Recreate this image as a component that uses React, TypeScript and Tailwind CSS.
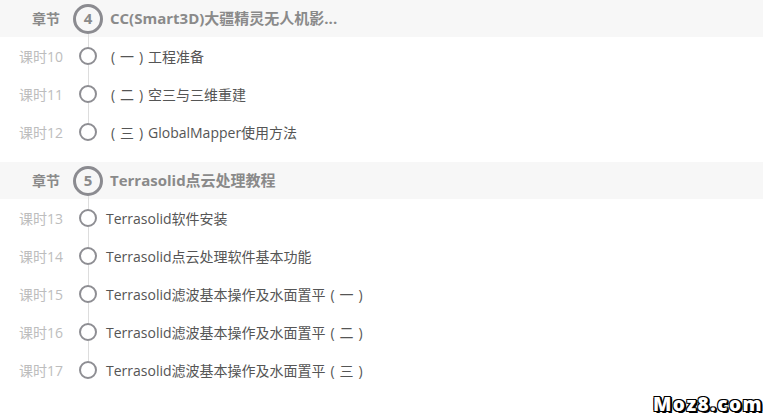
import React from "react";

type Lesson = { no: number; title: string };
type Chapter = { no: number; title: string; lessons: Lesson[] };

const chapters: Chapter[] = [
  {
    no: 4,
    title: "CC(Smart3D)大疆精灵无人机影...",
    lessons: [
      { no: 10, title: "（一）工程准备" },
      { no: 11, title: "（二）空三与三维重建" },
      { no: 12, title: "（三）GlobalMapper使用方法" },
    ],
  },
  {
    no: 5,
    title: "Terrasolid点云处理教程",
    lessons: [
      { no: 13, title: "Terrasolid软件安装" },
      { no: 14, title: "Terrasolid点云处理软件基本功能" },
      { no: 15, title: "Terrasolid滤波基本操作及水面置平（一）" },
      { no: 16, title: "Terrasolid滤波基本操作及水面置平（二）" },
      { no: 17, title: "Terrasolid滤波基本操作及水面置平（三）" },
    ],
  },
];

function Title({ text }: { text: string }) {
  const parts = text.split(/([（）])/);
  return (
    <>
      {parts.map((p, i) =>
        p === "（" || p === "）" ? (
          <span key={i} className="inline-block w-[14px] text-center">
            {p === "（" ? "(" : ")"}
          </span>
        ) : (
          <span key={i}>{p}</span>
        )
      )}
    </>
  );
}

function ChapterBlock({ ch }: { ch: Chapter }) {
  return (
    <div className="flex flex-col">
      <div className="flex h-[37px] items-stretch bg-[#f7f7f7]">
        <div className="flex w-[64px] items-center justify-end pr-[4px] text-[14px] font-bold text-[#8a8a8a]">
          章节
        </div>
        <div className="flex w-[48px] flex-col items-center">
          <div className="w-px flex-1" />
          <div className="flex h-[30px] w-[30px] items-center justify-center rounded-full border-[3px] border-[#8b8b90] bg-[#f7f7f7] text-[15px] font-bold text-[#8a8a8a]">
            {ch.no}
          </div>
          <div className="w-px flex-1 bg-[#dddddd]" />
        </div>
        <div className="-ml-[2px] flex items-center text-[15px] font-bold text-[#8a8a8a]">
          {ch.title}
        </div>
      </div>
      {ch.lessons.map((l, i) => {
        const last = i === ch.lessons.length - 1;
        return (
          <div key={l.no} className="flex h-[38px] items-stretch">
            <div className="flex w-[64px] items-center justify-end pr-[1px] text-[14px] text-[#bdbdbd]">
              课时{l.no}
            </div>
            <div className="flex w-[48px] flex-col items-center">
              <div className="w-px flex-1 bg-[#dddddd]" />
              <div className="h-[18px] w-[18px] rounded-full border-2 border-[#8e8e93] bg-white" />
              <div className={"w-px flex-1 " + (last ? "bg-transparent" : "bg-[#dddddd]")} />
            </div>
            <div className="-ml-[6px] flex items-center whitespace-pre text-[14px] text-[#555555]">
              <Title text={l.title} />
            </div>
          </div>
        );
      })}
    </div>
  );
}

export default function App() {
  return (
    <div
      className="relative flex h-[414px] w-[763px] flex-col gap-[11px] overflow-hidden bg-white"
      style={{ fontFamily: '"Open Sans", "Noto Sans CJK SC", sans-serif' }}
    >
      {chapters.map((ch) => (
        <ChapterBlock key={ch.no} ch={ch} />
      ))}
      <div className="absolute bottom-[-4px] right-[0px] text-[19px] font-black tracking-[1.5px] text-white [text-shadow:1px_1px_0_#000,-1px_-1px_0_#000,1px_-1px_0_#000,-1px_1px_0_#000,2px_2px_0_#000,2px_0_0_#000]">
        Moz8.com
      </div>
    </div>
  );
}
